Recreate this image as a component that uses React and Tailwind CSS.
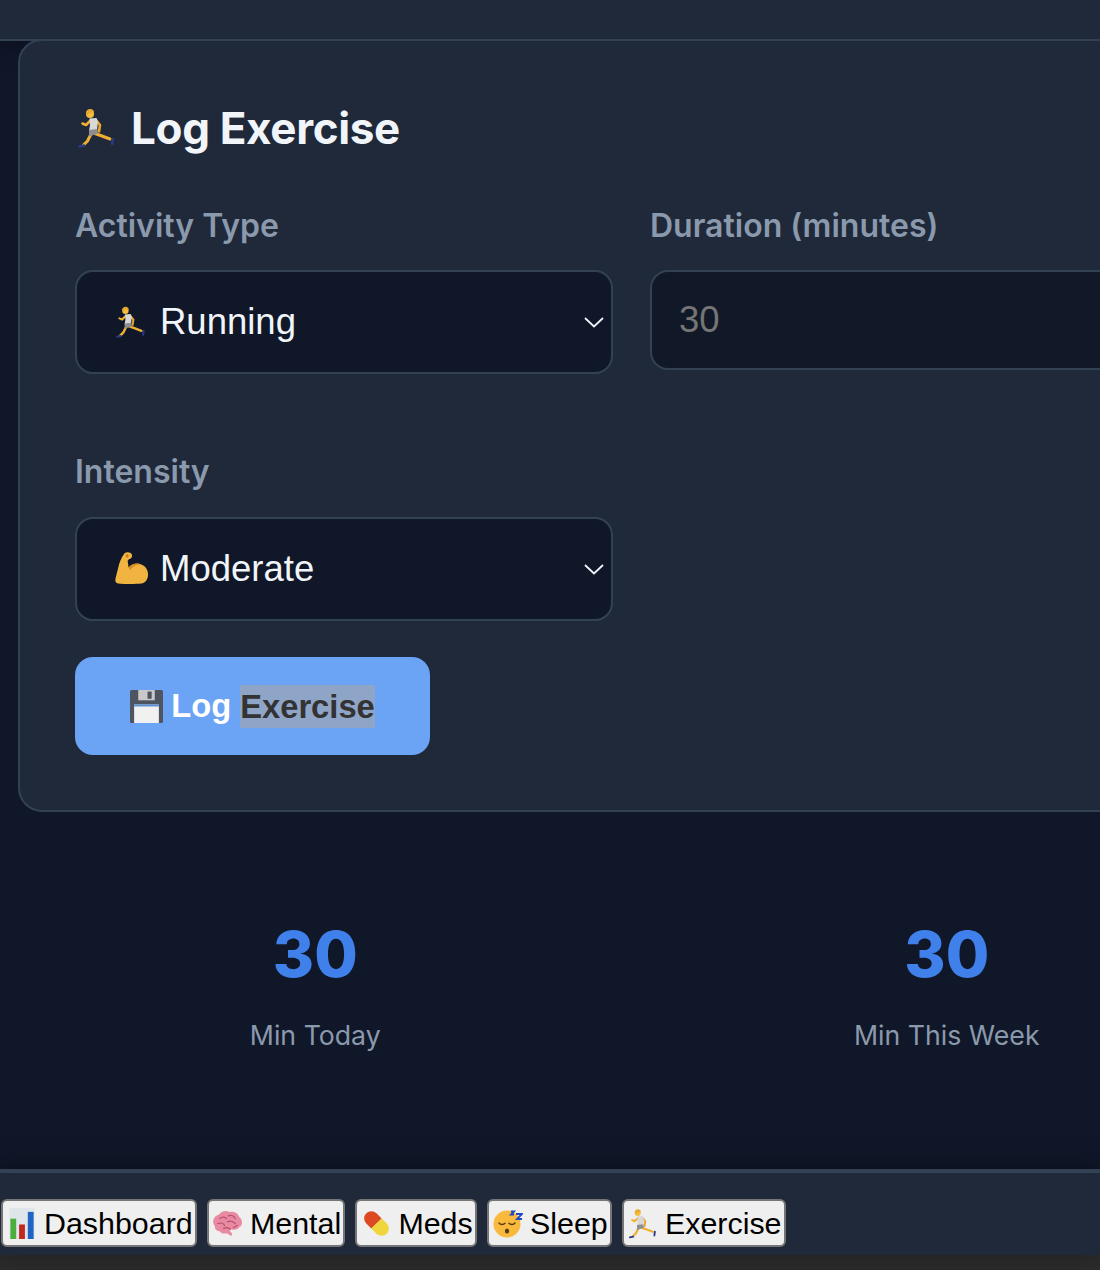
import React from 'react'

function Runner({ className }) {
  return (
    <svg viewBox="0 0 40 40" className={className} fill="none" strokeLinecap="round" strokeLinejoin="round">
      <path d="M14 26l-3.500 7-4 4" stroke="#f0b02f" strokeWidth="3" />
      <path d="M18 25.500l7 2.500 8 3" stroke="#f0b02f" strokeWidth="3" />
      <path d="M2.500 38.500l4.500-1" stroke="#2a3a8a" strokeWidth="2.500" />
      <path d="M35.800 31l-.6 5" stroke="#2a3a8a" strokeWidth="2.500" />
      <path d="M14 12l-5 5-3.500-1.500" stroke="#f0b02f" strokeWidth="2.600" />
      <path d="M19 12l4 5-1 6.500" stroke="#e9a52a" strokeWidth="2.600" />
      <path d="M12.500 10.500l7-.5 1.500 4-1 8-8 1 1-6z" fill="#d8d8d8" />
      <path d="M12 22l8.500-1 .5 4.500-9 3z" fill="#8e8e8e" />
      <circle cx="13" cy="6" r="4" fill="#f5bd3e" />
      <path d="M9 5.500c0-3.500 3-5 5.500-4.200 2 .6 3 2.200 2.300 3.700-2.800-1-5-.3-6.300 2.500z" fill="#e8a92d" />
    </svg>
  )
}

function Muscle({ className }) {
  return (
    <svg viewBox="0 0 36 36" className={className}>
      <path d="M10 1.500c3-1.500 7-.5 7.500 2 .5 2.300-1 4-3 4.300l-1.500 1.700 1 7c3-3.500 8-5 12.500-3.500 4.500 1.500 7.500 5.500 7.500 10.500 0 5-2.500 9-7 9.500-6 .6-16 .8-24-.2-2.500-.3-3-2.500-2.500-5l3-11.800c.8-4 3-10 6.500-14.500z" fill="#f2b440" />
      <path d="M14 16.500c3-3.500 8-5 12.500-3.500-5 .3-9 2.700-11 6.500z" fill="#d68f22" />
      <circle cx="12.500" cy="4.500" r="1.600" fill="#c67f1a" />
    </svg>
  )
}

function Floppy({ className }) {
  return (
    <svg viewBox="0 0 32 32" className={className}>
      <rect x="0" y="0" width="32" height="32" rx="1.500" fill="#4e5560" />
      <rect x="8" y="0" width="16" height="10" fill="#c9c9c9" />
      <rect x="17" y="1.500" width="4" height="7" fill="#4e5560" />
      <rect x="4" y="14" width="24" height="18" fill="#f1f1f1" />
      <rect x="4" y="14" width="24" height="2" fill="#5b92d6" />
    </svg>
  )
}

function BarChart({ className }) {
  return (
    <svg viewBox="0 0 26 32" className={className}>
      <rect width="26" height="32" fill="#dfe6ea" />
      <rect x="1" y="11" width="6" height="21" fill="#4cae3e" />
      <rect x="10" y="17" width="6" height="15" fill="#c2281f" />
      <rect x="19" y="4" width="6" height="28" fill="#1f63c4" />
    </svg>
  )
}

function Brain({ className }) {
  return (
    <svg viewBox="0 0 32 28" className={className}>
      <path d="M3 17C-1 12 2 6 7 5c2-4 8-5 11-3 4-1 9 1 10 5 4 3 4 9 0 11-2 3-6 3-8 2l-2 1 3 4-1 2-5-3c-3 1-6 0-7-2-2 0-4-1-5-3z" fill="#e88aa2" />
      <path d="M8 9c2-2 5-2 7 0M17 6c3-1 6 0 7 3M6 14c3-1 6 0 7 2M16 12c3-1 6 0 8 2M12 19c2-1 5-1 7 1M22 18c1 0 3-1 4-2" stroke="#b9506e" strokeWidth="1.300" fill="none" strokeLinecap="round" />
    </svg>
  )
}

function Pill({ className }) {
  return (
    <svg viewBox="0 0 30 30" className={className}>
      <g transform="rotate(-45 15 15)">
        <path d="M8 15V8a7 7 0 0 1 14 0v7z" fill="#dd4a22" />
        <path d="M8 15h14v7a7 7 0 0 1-14 0z" fill="#f1d53c" />
      </g>
    </svg>
  )
}

function Sleepy({ className }) {
  return (
    <svg viewBox="0 0 30 30" className={className}>
      <circle cx="14" cy="16" r="13.500" fill="#f8b93d" />
      <path d="M6 15c1.500 2 4.500 2 6 .3M16 15.300c1.500 1.700 4.500 1.700 6-.3" stroke="#5a3a12" strokeWidth="1.400" fill="none" strokeLinecap="round" />
      <ellipse cx="14" cy="23" rx="2.200" ry="2.600" fill="#5a3a12" />
      <path d="M23 6h6l-5 5h5M18 3.500h3l-3 3h3" stroke="#1f49c4" strokeWidth="1.800" fill="none" />
    </svg>
  )
}

function Chevron() {
  return (
    <svg viewBox="0 0 22 12" className="w-[22px] h-[12px] absolute right-[6px] top-1/2 -translate-y-1/2">
      <path d="M2 2l9 8.500 9-8.500" stroke="#f1f5f9" strokeWidth="1.800" fill="none" />
    </svg>
  )
}

function FakeSelect({ icon, label }) {
  return (
    <div className="relative h-[104px] rounded-[18px] border-2 border-[#334155] bg-[#101729] flex items-center pl-[38px] text-[#f1f5f9] text-[36.500px] font-['Liberation_Sans',sans-serif]">
      {icon}
      <span>{label}</span>
      <Chevron />
    </div>
  )
}

function Stat({ value, label }) {
  return (
    <div className="flex flex-col items-center">
      <div className="text-[#3f80ea] text-[63px] font-extrabold leading-[76px] font-['Inter',sans-serif]">{value}</div>
      <div className="mt-[23px] text-[#8b99ad] text-[26.700px] leading-[40px] font-['Inter',sans-serif]">{label}</div>
    </div>
  )
}

function NavButton({ icon, label }) {
  return (
    <button className="h-[48px] flex items-center gap-[6px] pl-[3px] pr-[2px] rounded-[6px] border-2 border-[#767676] bg-[#efefef] text-black text-[30.400px] font-['Liberation_Sans',sans-serif]">
      <span className="w-[32px] flex justify-center">{icon}</span>
      <span className="pt-[2px]">{label}</span>
    </button>
  )
}

export default function App() {
  return (
    <div className="w-[1100px] h-[1270px] overflow-hidden flex flex-col bg-[#101729] font-['Inter',sans-serif]">
      <div className="h-[41px] shrink-0 bg-[#1f293a] border-b-2 border-[#334155] shadow-[0_4px_24px_rgba(0,0,0,0.35)]"></div>

      <div className="flex-1 min-h-0 overflow-hidden pl-[18px]">
        <div className="w-[1226px]">
          {/* form card */}
          <div className="-mt-[2px] h-[773px] rounded-[24px] border-2 border-[#334155] bg-[#1f293a] pt-[59px] px-[55px]">
            <h2 className="flex items-center h-[56px] text-[44px] font-bold text-[#f1f5f9] tracking-[-0.35px]">
              <Runner className="w-[40px] h-[40px] mr-[14px] ml-[2px]" />
              Log Exercise
            </h2>

            <div className="grid grid-cols-[538px_1fr] gap-x-[37px] mt-[50px]">
              <div>
                <label className="block text-[32px] leading-[40px] font-semibold text-[#8b99ad]">Activity Type</label>
                <div className="mt-[24px]">
                  <FakeSelect icon={<Runner className="w-[32px] h-[32px] mr-[13px]" />} label="Running" />
                </div>
              </div>
              <div>
                <label className="block text-[32px] leading-[40px] font-semibold text-[#8b99ad]">Duration (minutes)</label>
                <input
                  placeholder="30"
                  className="mt-[24px] w-full h-[100px] rounded-[18px] border-2 border-[#334155] bg-[#111827] px-[27px] text-[36.500px] font-['Liberation_Sans',sans-serif] placeholder:text-[#757575] outline-none"
                />
              </div>
            </div>

            <div className="grid grid-cols-[538px_1fr] gap-x-[37px] mt-[78px]">
              <div>
                <label className="block text-[32px] leading-[40px] font-semibold text-[#8b99ad]">Intensity</label>
                <div className="mt-[25px]">
                  <FakeSelect icon={<Muscle className="w-[35px] h-[36px] mr-[10px]" />} label="Moderate" />
                </div>
              </div>
            </div>

            <button className="mt-[36px] w-[355px] h-[98px] rounded-[18px] bg-[#6ba3f5] flex items-center justify-center text-white text-[32.700px] font-bold font-['Liberation_Sans',sans-serif]">
              <Floppy className="w-[33px] h-[33px] mr-[8px]" />
              <span>Log&nbsp;</span>
              <span className="bg-[#8fa5c8] text-[#333333] leading-[43px]">Exercise</span>
            </button>
          </div>

          {/* stats */}
          <div className="grid grid-cols-2 gap-x-[37px] mt-[104px]">
            <Stat value="30" label="Min Today" />
            <Stat value="30" label="Min This Week" />
          </div>
        </div>
      </div>

      {/* bottom tabs */}
      <div className="relative h-[86px] shrink-0 bg-[#1f293a] border-t-4 border-[#334155] flex items-start gap-[10.250px] pt-[26px] pl-[1px] shadow-[0_-4px_24px_rgba(0,0,0,0.35)]">
        <NavButton icon={<BarChart className="w-[26px] h-[31px]" />} label="Dashboard" />
        <NavButton icon={<Brain className="w-[31px] h-[27px]" />} label="Mental" />
        <NavButton icon={<Pill className="w-[31px] h-[31px]" />} label="Meds" />
        <NavButton icon={<Sleepy className="w-[30px] h-[30px]" />} label="Sleep" />
        <NavButton icon={<Runner className="w-[30px] h-[31px]" />} label="Exercise" />
      </div>
      <div className="h-[15px] shrink-0 bg-[#2b2b2b]"></div>
    </div>
  )
}
